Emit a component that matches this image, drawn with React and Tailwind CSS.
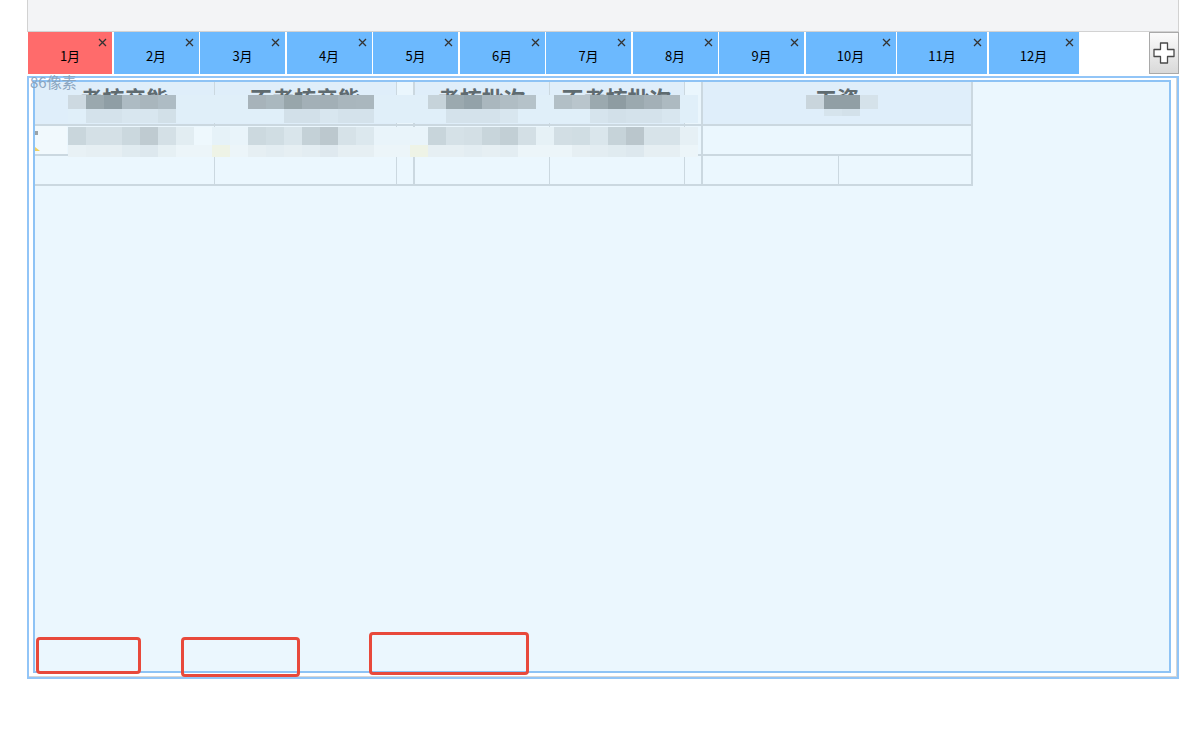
import React from 'react';

const months = ['1月', '2月', '3月', '4月', '5月', '6月', '7月', '8月', '9月', '10月', '11月', '12月'];

// 马赛克色块（每格 18px）
const BG_A = '#e0eff9';
const BG_C = '#e9f4fa';
const BG_D = '#ecf5f9';

const rowA = {
  0: '#cdd9e1', 1: '#9aa8ae', 2: '#8f9ea5', 3: '#adbbc3', 4: '#a9b6bd', 5: '#aebcc4',
  10: '#a7b3ba', 11: '#aab8bf', 12: '#98a6ab', 13: '#a3b0b7', 14: '#a2afb6', 15: '#a9b6bd', 16: '#aab7be',
  20: '#c6d3da', 21: '#9ba9af', 22: '#93a2a9', 23: '#aab7be', 24: '#b0bdc4', 25: '#b5c2c9',
  27: '#b2bfc6', 28: '#b9c5cc', 29: '#9ba9af', 30: '#8e9ca2', 31: '#9ba9af', 32: '#a3b0b7', 33: '#adbac1',
};
const rowB = {
  1: '#d4e2eb', 2: '#d4e2eb', 3: '#d8e6ef', 4: '#d8e6ef', 5: '#d2e0e8',
  12: '#d2e0e9', 13: '#d2e0e9', 14: '#d8e6ef', 15: '#d4e2eb', 16: '#d4e2eb',
  21: '#d4e2eb', 22: '#d4e2eb', 23: '#d4e2eb', 24: '#d8e6ef',
  29: '#d6e4ed', 30: '#d2e0e9', 31: '#d4e2eb', 32: '#d4e2eb', 33: '#d8e6ef',
};
const rowC = {
  0: '#c9d6dc', 1: '#d4e0e6', 2: '#d4e0e6', 3: '#cbd8de', 4: '#bfcbd1', 5: '#d4e0e6', 6: '#e2edf2', 7: '#eef8fd', 8: '#e6f2f8',
  10: '#ccd9df', 11: '#d0dde3', 12: '#d9e5eb', 13: '#c4d1d7', 14: '#bcc8ce', 15: '#d6e2e8', 16: '#dce8ee',
  20: '#c8d5db', 21: '#d5e1e7', 22: '#d3dfe5', 23: '#c8d5db', 24: '#c2cfd5', 25: '#d3dfe5', 26: '#e6f1f6',
  27: '#d2dee4', 28: '#d0dde3', 29: '#dae6ec', 30: '#c6d3d9', 31: '#bac6cc', 32: '#d7e3e9', 33: '#d7e3e9', 34: '#e6f0f5',
};
const rowD = {
  0: '#e8f1f5', 1: '#e6eff3', 2: '#e6eff3', 3: '#e0ebf0', 4: '#dde8ee', 5: '#e6f0f4', 8: '#eef3e6',
  10: '#e6eff3', 11: '#e3edf2', 12: '#e6eff3', 13: '#e3edf2', 14: '#dfe9ef', 15: '#e6eff3', 16: '#e6eff3',
  19: '#eef3e6', 20: '#e6eff3', 21: '#e6eff3', 22: '#e3edf2', 23: '#e6eff3', 24: '#e3edf2',
  28: '#e6eff3', 29: '#e3edf2', 30: '#e0ebf0', 31: '#dde8ee', 32: '#e6eff3', 33: '#e6eff3',
};

function MosaicRow({ map, bg, top, height }) {
  return (
    <div className="absolute left-[68px] flex" style={{ top, height }}>
      {Array.from({ length: 35 }).map((_, i) => (
        <div key={i} className="w-[18px] h-full" style={{ backgroundColor: map[i] || bg }} />
      ))}
    </div>
  );
}

function CloseX() {
  return (
    <svg className="absolute right-[5px] top-[6px]" width="9" height="9" viewBox="0 0 9 9">
      <path d="M1 1 L8 8 M8 1 L1 8" stroke="#333" strokeWidth="1.3" />
    </svg>
  );
}

export default function App() {
  const th = 'align-top pt-[2px] text-[22px] leading-[26px] font-bold text-[#5f6b70] text-center border-r border-b-2 border-[#cbd8e0] overflow-hidden whitespace-nowrap';
  const td = 'border-r border-b-2 border-[#cbd8e0] p-0';

  return (
    <div className="relative w-[1198px] h-[732px] bg-white overflow-hidden" style={{ fontFamily: '"Noto Sans CJK SC", "Noto Sans", sans-serif' }}>
      <div className="ml-[27px] w-[1152px]">
        {/* 顶部灰条 */}
        <div className="h-[32px] bg-[#f3f4f6] border-l border-r border-b border-[#d2d2d2]" />

        {/* 月份页签 */}
        <div className="flex h-[42px] pl-[1px] bg-white">
          {months.map((m, i) => (
            <div
              key={m}
              className={`relative h-full flex items-center justify-center pt-[5px] text-[13px] text-black ${
                i === 0 ? 'bg-[#ff6b6b] w-[84px]' : i >= 9 ? 'bg-[#6cb9fe] w-[90px] ml-[1.5px]' : 'bg-[#6cb9fe] w-[85px] ml-[1.5px]'
              }`}
            >
              {m}
              <CloseX />
            </div>
          ))}
          <div className="flex-1" />
          <div className="w-[30px] h-full border border-[#a9a9a9] bg-gradient-to-b from-[#fbfbfb] to-[#d9d9d9] flex items-center justify-center">
            <svg width="24" height="24" viewBox="0 0 24 24">
              <path d="M8.5 2 H15.5 V8.5 H22 V15.5 H15.5 V22 H8.5 V15.5 H2 V8.5 H8.5 Z" fill="#fff" stroke="#4a4a4a" strokeWidth="1.3" strokeLinejoin="round" />
            </svg>
          </div>
        </div>

        {/* 主面板 */}
        <div className="mt-[2px] border-2 border-[#92c5f7]">
          <div className="border-r border-b border-[#d6d6d6] pt-[2px] pl-[4px] pr-[5px] pb-[3px] bg-white">
            <div className="h-[593px] border-2 border-[#8ec3f5] bg-[#ebf7fe]">
              <table className="border-collapse table-fixed w-[937px]">
                <colgroup>
                  <col className="w-[179px]" />
                  <col className="w-[182px]" />
                  <col className="w-[18px]" />
                  <col className="w-[135px]" />
                  <col className="w-[135px]" />
                  <col className="w-[18px]" />
                  <col className="w-[136px]" />
                  <col className="w-[134px]" />
                </colgroup>
                <tbody>
                  <tr className="h-[43px] bg-[#dfeefa]">
                    <td className={th}>考核产能</td>
                    <td className={th}>不考核产能</td>
                    <td className={`${th} bg-[#eaf6fd] border-r-2`}></td>
                    <td className={th}>考核批次</td>
                    <td className={th}>不考核批次</td>
                    <td className={`${th} bg-[#eaf6fd] border-r-2`}></td>
                    <td className={`${th} border-r-2`} colSpan={2}>工资</td>
                  </tr>
                  <tr className="h-[30px]">
                    <td className={`${td} relative`}>
                      <div className="absolute left-0 top-0 w-[32px] h-full bg-[#f1f9fd]" />
                      <div className="absolute left-0 top-[5px] w-[3px] h-[4px] bg-[#9aa3a8]" />
                      <div className="absolute left-0 bottom-[3px] w-0 h-0 border-l-[5px] border-l-[#f0d060] border-t-[4px] border-t-transparent" />
                    </td>
                    <td className={td}></td>
                    <td className={`${td} border-r-2`}></td>
                    <td className={td}></td>
                    <td className={td}></td>
                    <td className={`${td} border-r-2`}></td>
                    <td className={`${td} border-r-2`} colSpan={2}></td>
                  </tr>
                  <tr className="h-[30px]">
                    <td className={td}></td>
                    <td className={td}></td>
                    <td className={`${td} border-r-2`}></td>
                    <td className={td}></td>
                    <td className={td}></td>
                    <td className={`${td} border-r-2`}></td>
                    <td className={td}></td>
                    <td className={`${td} border-r-2`}></td>
                  </tr>
                </tbody>
              </table>
            </div>
          </div>
        </div>
      </div>

      {/* 马赛克遮挡 */}
      <MosaicRow map={rowA} bg={BG_A} top={95} height={14} />
      <MosaicRow map={rowB} bg={BG_A} top={109} height={14} />
      <MosaicRow map={rowC} bg={BG_C} top={127} height={18} />
      <MosaicRow map={rowD} bg={BG_D} top={145} height={12} />
      <div className="absolute left-[806px] top-[95px] flex h-[14px]">
        <div className="w-[18px] bg-[#c9d5dc]" />
        <div className="w-[18px] bg-[#919fa5]" />
        <div className="w-[18px] bg-[#919fa5]" />
        <div className="w-[18px] bg-[#d5e2ea]" />
      </div>
      <div className="absolute left-[824px] top-[109px] flex h-[7px]">
        <div className="w-[18px] bg-[#d6e4ed]" />
        <div className="w-[18px] bg-[#d3e1ea]" />
      </div>

      {/* 标注 */}
      <div className="absolute left-[30px] top-[72px] text-[15px] leading-[20px] text-[#8aa5bf]">86像素</div>
      <div className="absolute left-[36px] top-[637px] w-[105px] h-[37px] border-[3px] border-[#e8493b] rounded-[4px]" />
      <div className="absolute left-[181px] top-[637px] w-[119px] h-[40px] border-[3px] border-[#e8493b] rounded-[4px]" />
      <div className="absolute left-[369px] top-[632px] w-[160px] h-[43px] border-[3px] border-[#e8493b] rounded-[4px]" />
    </div>
  );
}
